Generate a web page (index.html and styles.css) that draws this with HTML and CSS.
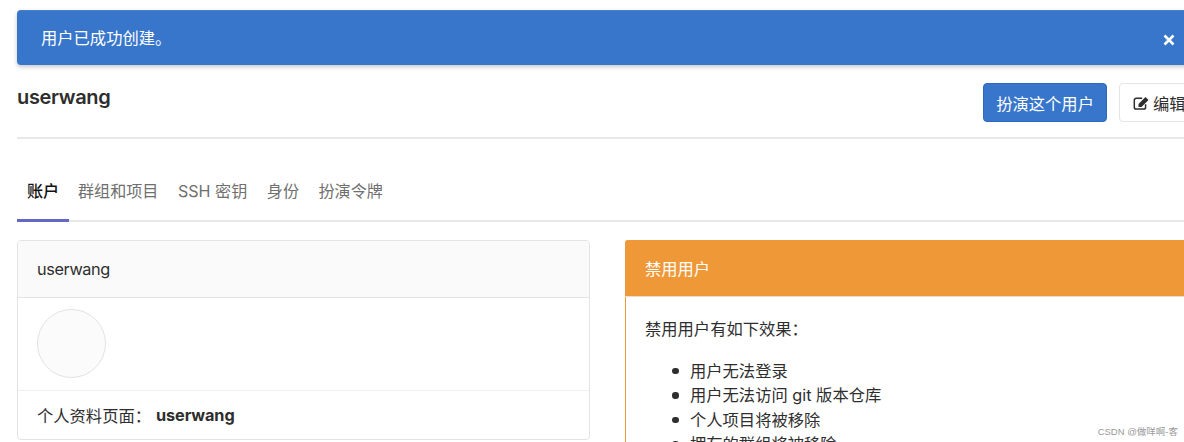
FILE: index.html
```html
<!DOCTYPE html>
<html lang="zh-CN">
<head>
<meta charset="utf-8">
<title>userwang</title>
<link rel="stylesheet" href="styles.css">
</head>
<body>
<main class="page">
  <div class="alert">
    <span class="alert-text">用户已成功创建。</span>
    <svg class="alert-close" viewBox="0 0 12 12" width="12" height="12" aria-label="关闭"><path d="M1.5 1.5L10.5 10.5M10.5 1.5L1.5 10.5"/></svg>
  </div>
  <header class="head">
    <h1 class="title">userwang</h1>
    <div class="actions">
      <a class="btn btn-primary">扮演这个用户</a>
      <a class="btn btn-default">
        <svg class="edit-icon" viewBox="0 0 16 16" width="16" height="16"><path class="edit-box" d="M12.6 9.2V12.2A1.9 1.9 0 0 1 10.7 14.1H3.2A1.9 1.9 0 0 1 1.3 12.2V5.2A1.9 1.9 0 0 1 3.2 3.3H9.2"/><path class="edit-pen" d="M5.5 9L12.5 2L15.5 5L8.5 12H5.5Z"/></svg>
        编辑
      </a>
    </div>
  </header>
  <nav class="tabs">
    <a class="tab tab-active">账户</a>
    <a class="tab">群组和项目</a>
    <a class="tab">SSH 密钥</a>
    <a class="tab">身份</a>
    <a class="tab">扮演令牌</a>
  </nav>
  <section class="columns">
    <div class="card">
      <div class="card-head card-head-plain">userwang</div>
      <div class="avatar-row"><div class="avatar"></div></div>
      <div class="profile-row">个人资料页面：<strong class="profile-name">userwang</strong></div>
    </div>
    <div class="card card-warning">
      <div class="card-head card-head-warning">禁用用户</div>
      <div class="card-body">
        <p class="lead">禁用用户有如下效果：</p>
        <ul class="effects">
          <li>用户无法登录</li>
          <li>用户无法访问 git 版本仓库</li>
          <li>个人项目将被移除</li>
          <li>拥有的群组将被移除</li>
        </ul>
      </div>
    </div>
  </section>
</main>
<div class="watermark">CSDN @做咩啊-客</div>
</body>
</html>
```
FILE: styles.css
```css
* { box-sizing: border-box; }
html, body { margin: 0; height: 100%; overflow: hidden; background: #fff; }
body {
  font-family: Inter, "Noto Sans CJK SC", sans-serif;
  font-size: 16.3px;
  color: #2e2e2e;
}
.page { width: 1182px; margin-left: 17px; padding-top: 10px; }

.alert {
  height: 55px;
  display: flex;
  align-items: center;
  justify-content: space-between;
  padding: 0 24px 2px 24px;
  background: #3876cb;
  border-top: 1px solid #4a80c8;
  border-radius: 4px 0 0 4px;
  box-shadow: 0 2px 4px rgba(0, 0, 0, .22);
  color: #fff;
}
.alert-close { margin-top: 5px; fill: none; stroke: #fff; stroke-width: 2.6; }

.head {
  height: 74px;
  display: flex;
  justify-content: space-between;
  align-items: flex-start;
  padding-top: 18px;
  border-bottom: 2px solid #e8e8e8;
}
.title { margin: -1px 0 0; font-size: 20px; line-height: 30px; font-weight: 600; letter-spacing: -.35px; color: #2e2e2e; }
.actions { display: flex; gap: 12px; }
.btn {
  height: 39px;
  display: flex;
  align-items: center;
  padding: 0 12.5px;
  border-radius: 4px;
  white-space: nowrap;
}
.btn-primary { background: #3876cb; border: 1px solid #2f69bd; color: #fff; }
.btn-default { background: #fff; border: 1px solid #e5e5e5; color: #2e2e2e; gap: 4px; }
.edit-box { fill: none; stroke: #2e2e2e; stroke-width: 1.5; }
.edit-pen { fill: #2e2e2e; }

.tabs {
  height: 83px;
  display: flex;
  align-items: flex-end;
  gap: 19.5px;
  border-bottom: 2px solid #e8e8e8;
}
.tab {
  height: 57px;
  margin-bottom: -2px;
  padding: 14px 0 0;
  font-size: 16.1px;
  line-height: 24px;
  color: #6f6f6f;
  white-space: nowrap;
}
.tab-active {
  width: 52px;
  margin-right: -10.5px;
  padding-left: 10px;
  color: #111;
  font-weight: 500;
  border-bottom: 3px solid #6666c4;
}

.columns { display: grid; grid-template-columns: 573px 573px; gap: 35px; margin-top: 18px; }
.card { height: 200px; border: 1px solid #e3e3e3; border-radius: 4px; background: #fff; }
.card-head {
  height: 57px;
  display: flex;
  align-items: center;
  padding: 0 19px;
  background: #fafafa;
  border-bottom: 1px solid #e5e5e5;
  border-radius: 3px 3px 0 0;
}
.card-head-plain { letter-spacing: -.4px; }
.avatar-row { height: 93px; padding: 11px 19px 0; border-bottom: 1px solid #f0f0f0; }
.avatar { width: 69px; height: 69px; border-radius: 50%; background: #fbfbfb; border: 1px solid #e2e2e2; }
.profile-row { height: 48px; display: flex; align-items: center; padding: 0 19px; }
.profile-name { margin-left: 5px; font-weight: 700; letter-spacing: -.1px; }

.card-warning { height: 240px; border-color: #ef9838; }
.card-head-warning { margin: -1px -1px 0; height: 57px; padding-left: 20px; background: #ef9838; border-bottom: 1px solid #f0dcc4; color: #fff; }
.card-body { padding: 20px 19px 0; }
.lead { margin: 0 0 18px; line-height: 24px; }
.effects { margin: 0; padding-left: 27px; list-style: none; line-height: 24.4px; }
.effects li { display: flex; align-items: center; gap: 11.5px; white-space: nowrap; }
.effects li::before { content: ""; width: 6.5px; height: 6.5px; border-radius: 50%; background: #2e2e2e; flex: none; }

.watermark {
  position: absolute;
  right: 6px;
  bottom: 3px;
  font-size: 9.5px;
  line-height: 14px;
  color: #9a9a9a;
  font-family: "Liberation Sans", "Noto Sans CJK SC", sans-serif;
}
```
